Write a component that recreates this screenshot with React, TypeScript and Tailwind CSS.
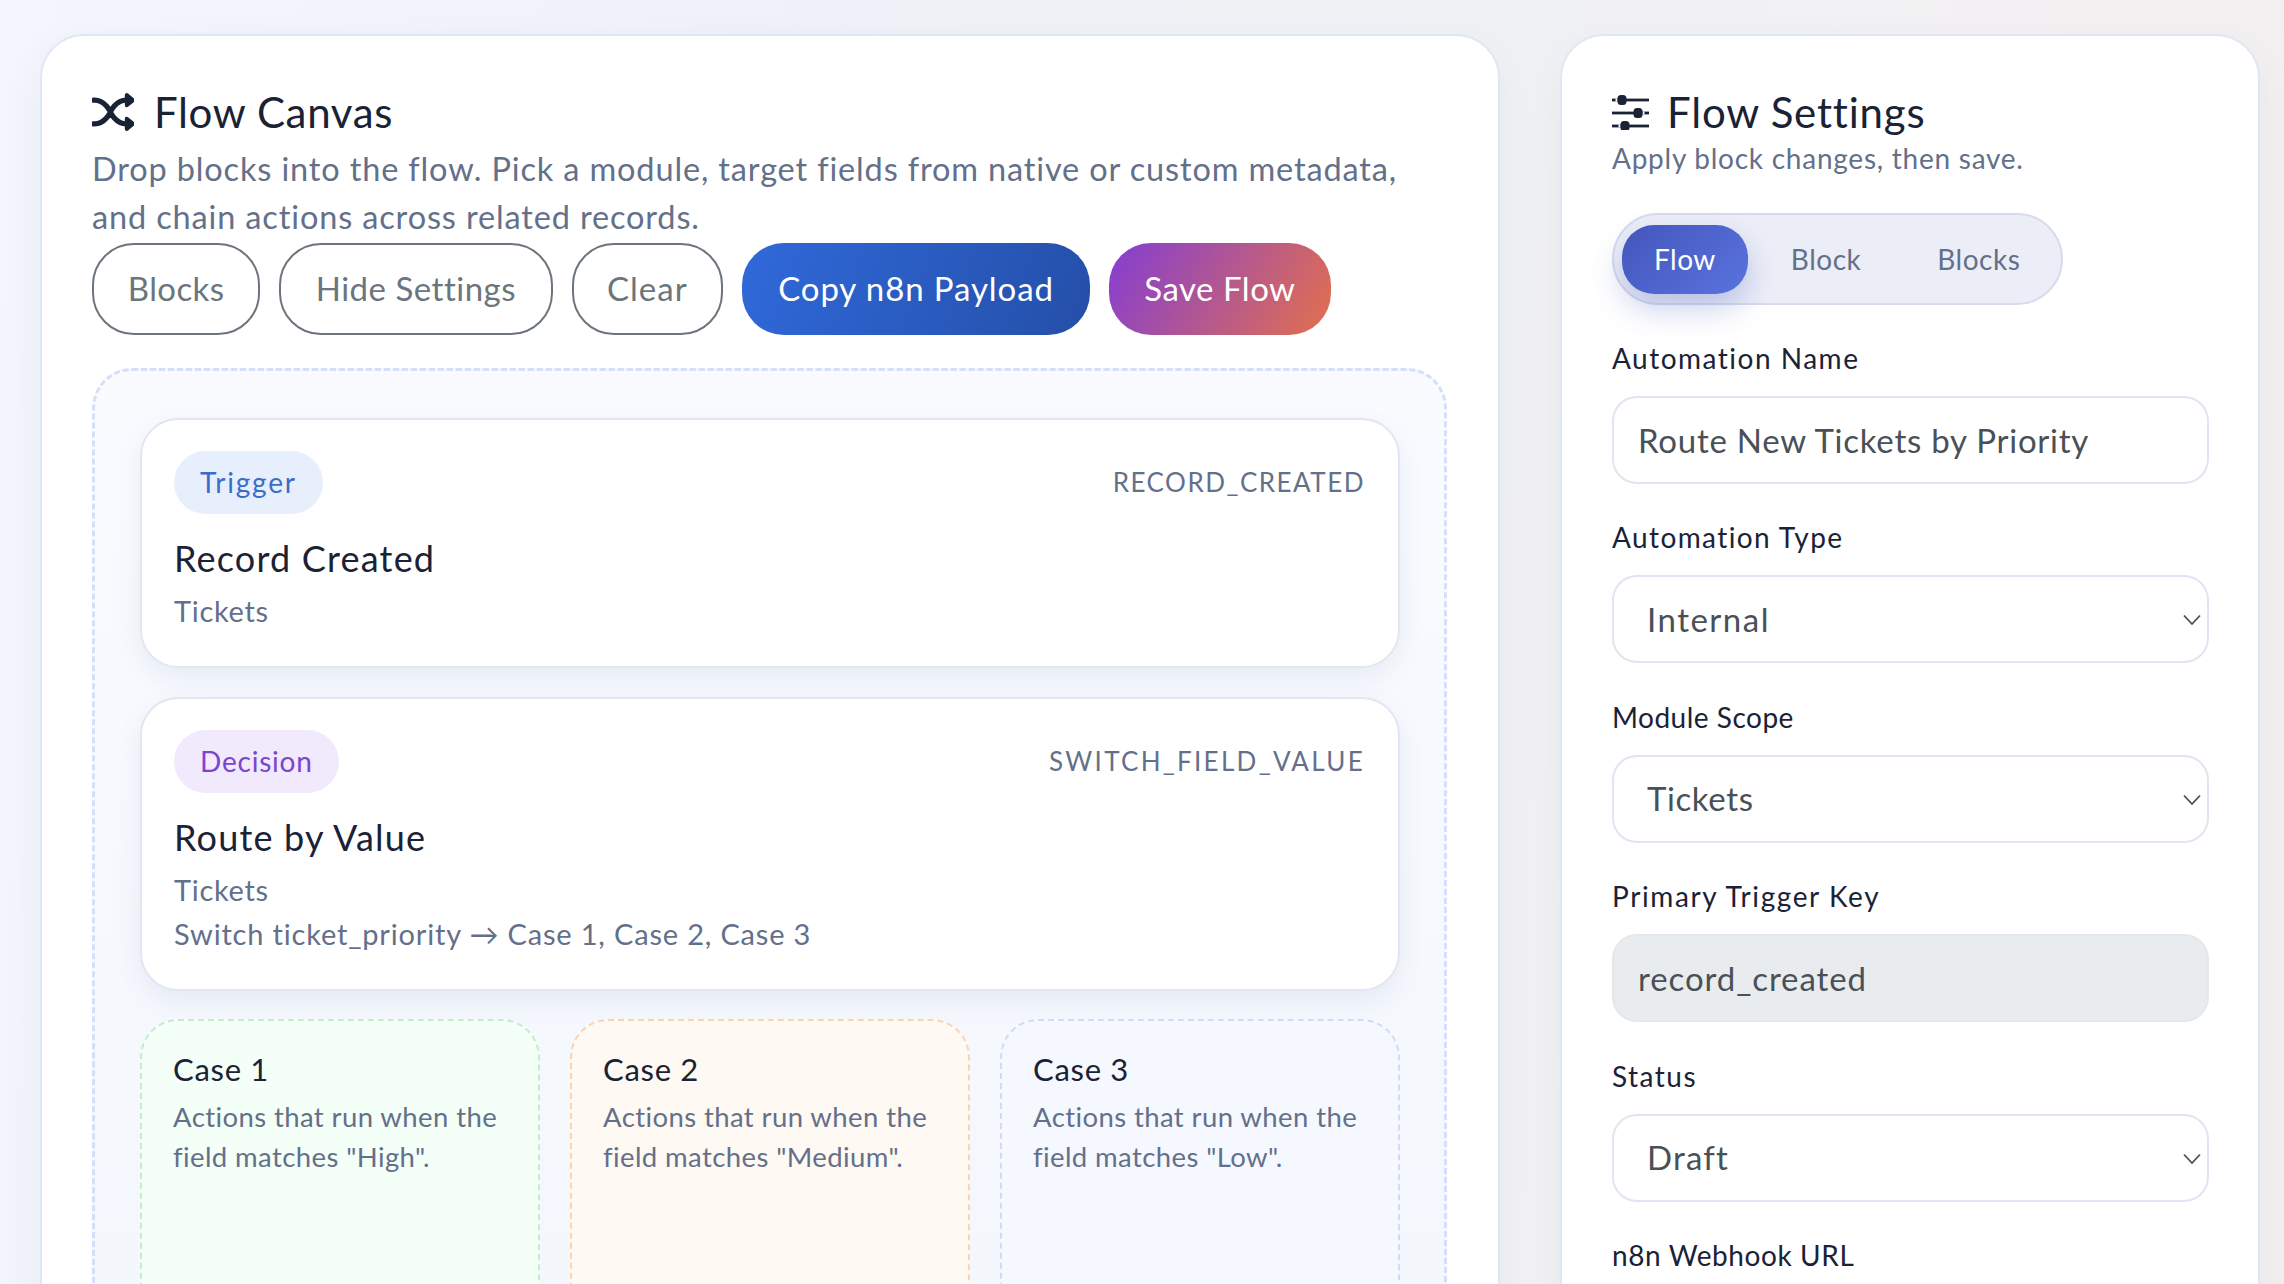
import React from "react";
import { BsShuffle } from "react-icons/bs";

const outlineBtn =
  "h-[92px] rounded-[42px] border-2 border-[#6c757d] bg-white text-[#6c757d] text-[33px]";

function SlidersIcon() {
  return (
    <svg viewBox="0 0 37 36" className="w-[37px] h-[36px]" fill="#1a2236">
      <rect x="0" y="4.6" width="37" height="2.8" />
      <rect x="0" y="17.6" width="37" height="2.8" />
      <rect x="0" y="30.6" width="37" height="2.8" />
      <rect x="3.5" y="4.6" width="2" height="2.8" fill="#fff" />
      <rect x="30.5" y="17.6" width="2" height="2.8" fill="#fff" />
      <rect x="6.5" y="30.6" width="2" height="2.8" fill="#fff" />
      <rect x="5.5" y="1" width="9" height="10" rx="3.5" />
      <rect x="21.5" y="14" width="9" height="10" rx="3.5" />
      <rect x="8.5" y="27" width="9" height="10" rx="3.5" />
    </svg>
  );
}

function Field({ label, labelCls, children }: { label: string; labelCls: string; children: React.ReactNode }) {
  return (
    <div className="mb-[35.4px]">
      <div className={`h-[36px] leading-[36px] text-[28px] text-[#1a2236] mb-[20px] ${labelCls}`}>{label}</div>
      {children}
    </div>
  );
}

function Select({ value, cls }: { value: string; cls: string }) {
  return (
    <div className="relative h-[88px]">
      <select
        defaultValue={value}
        className={`appearance-none w-full h-full rounded-[25px] border-2 border-[#dfe5f1] bg-white pl-[33px] text-[33px] text-[#495057] outline-none ${cls}`}
      >
        <option>{value}</option>
      </select>
      <svg viewBox="0 0 18 12" className="absolute right-[8px] top-[39px] w-[18px] h-[12px]" fill="none" stroke="#495057" strokeWidth="1.8">
        <path d="M1 1.5 9 10l8-8.5" />
      </svg>
    </div>
  );
}

function Block({
  badge,
  badgeCls,
  code,
  codeCls,
  title,
  lines,
}: {
  badge: string;
  badgeCls: string;
  code: string;
  codeCls: string;
  title: string;
  lines: { text: string; cls: string }[];
}) {
  return (
    <div className="rounded-[38px] border-2 border-[#e2e6f0] bg-white px-[32px] pt-[31px] pb-[33px] shadow-[0_10px_28px_rgba(70,90,150,0.09)]">
      <div className="flex items-center justify-between">
        <span className={`h-[63px] leading-[63px] rounded-full px-[26px] text-[28px] ${badgeCls}`}>{badge}</span>
        <span className={`text-[26px] text-[#64708a] mr-[1px] ${codeCls}`}>{code}</span>
      </div>
      <div className="mt-[20px] h-[48px] leading-[48px] text-[36px] text-[#1a2236] tracking-[1.2px]">{title}</div>
      <div className="mt-[7px] text-[29px] leading-[44px] text-[#64708a]">
        {lines.map((l) => (
          <div key={l.text} className={l.cls}>
            {l.text}
          </div>
        ))}
      </div>
    </div>
  );
}

function CaseCol({ title, value, cls }: { title: string; value: string; cls: string }) {
  return (
    <div className={`rounded-[38px] border-2 border-dashed min-h-[400px] pl-[31px] pr-[28px] pt-[28px] ${cls}`}>
      <div className="h-[40px] leading-[40px] text-[31px] text-[#1a2236] tracking-[0.7px]">{title}</div>
      <div className="mt-[8px] text-[27.5px] leading-[40px] text-[#64708a] tracking-[0.4px]">
        Actions that run when the
        <br />
        field matches "{value}".
      </div>
    </div>
  );
}

export default function App() {
  return (
    <div
      className="h-screen overflow-hidden bg-[linear-gradient(100deg,#f3f6fc_0%,#eef1f7_35%,#f2f1f3_75%,#f3efef_100%)] pl-[40px] pr-[24px] pt-[34px] flex gap-[60px] items-start"
      style={{ fontFamily: '"Lato", "Noto Sans", sans-serif' }}
    >
      <section className="w-[1460px] shrink-0 rounded-[44px] border-2 border-[#dfe7f3] bg-white pl-[50px] pr-[51px] pt-[48px] pb-[40px] shadow-[0_14px_40px_rgba(60,80,130,0.06)]">
        <div className="flex items-center gap-[20px] h-[56px]">
          <BsShuffle className="w-[42px] h-[42px] text-[#1a2236] stroke-[1px] stroke-[#1a2236]" />
          <h2 className="text-[42px] leading-[56px] text-[#1a2236] tracking-[0.65px]">Flow Canvas</h2>
        </div>
        <p className="mt-[5px] text-[32.5px] leading-[48px] text-[#64708a] tracking-[0.85px]">
          Drop blocks into the flow. Pick a module, target fields from native or custom metadata,
          <br />
          and chain actions across related records.
        </p>
        <div className="mt-[2px] flex gap-[19px]">
          <button className={`${outlineBtn} px-[33.75px] tracking-[0.4px]`}>Blocks</button>
          <button className={`${outlineBtn} px-[34.5px] tracking-[0.5px]`}>Hide Settings</button>
          <button className={`${outlineBtn} px-[33.5px] tracking-[1px]`}>Clear</button>
          <button className="h-[92px] rounded-[42px] px-[36px] text-white text-[33px] tracking-[0.9px] bg-[linear-gradient(110deg,#3069da,#244fa8)]">
            Copy n8n Payload
          </button>
          <button className="h-[92px] rounded-[42px] px-[35.5px] text-white text-[33px] tracking-[0.5px] bg-[linear-gradient(120deg,#843dd3,#b85a8a_55%,#e3704c)]">
            Save Flow
          </button>
        </div>
        <div className="mt-[33px] rounded-[40px] border-[3px] border-dashed border-[#d5dffb] bg-[linear-gradient(180deg,#f9fbff,#f3f6fc)] pl-[45px] pr-[44px] pt-[47px] pb-[40px]">
          <div className="flex flex-col gap-[29px]">
            <Block
              badge="Trigger"
              badgeCls="bg-[#e7effc] text-[#3b6cc9] tracking-[1.8px]"
              code="RECORD_CREATED"
              codeCls="tracking-[1.5px]"
              title="Record Created"
              lines={[{ text: "Tickets", cls: "tracking-[0.7px]" }]}
            />
            <Block
              badge="Decision"
              badgeCls="bg-[#f1e9fc] text-[#7a45cf] tracking-[0.8px]"
              code="SWITCH_FIELD_VALUE"
              codeCls="tracking-[2.3px]"
              title="Route by Value"
              lines={[
                { text: "Tickets", cls: "tracking-[0.7px]" },
                { text: "Switch ticket_priority → Case 1, Case 2, Case 3", cls: "tracking-[0.82px]" },
              ]}
            />
          </div>
          <div className="mt-[28px] grid grid-cols-3 gap-[30px]">
            <CaseCol title="Case 1" value="High" cls="border-[#c4ebcf] bg-[#f4fff7]" />
            <CaseCol title="Case 2" value="Medium" cls="border-[#fbd3b0] bg-[#fff9f3]" />
            <CaseCol title="Case 3" value="Low" cls="border-[#cfdcf5] bg-[#f5f9ff]" />
          </div>
        </div>
      </section>

      <aside className="w-[700px] shrink-0 rounded-[44px] border-2 border-[#dfe7f3] bg-white pl-[50px] pr-[49px] pt-[48px] pb-[40px] shadow-[0_14px_40px_rgba(60,80,130,0.06)]">
        <div className="flex items-center gap-[18px] h-[56px]">
          <SlidersIcon />
          <h2 className="text-[42px] leading-[56px] text-[#1a2236] tracking-[0.8px]">Flow Settings</h2>
        </div>
        <p className="mt-[-2px] mb-[1px] h-[40px] text-[28px] leading-[40px] text-[#64708a] tracking-[0.75px]">
          Apply block changes, then save.
        </p>
        <div className="mt-[34px] inline-flex h-[92px] items-center gap-[10px] rounded-full border-2 border-[#d7dbed] bg-[#eceef7] px-[8px] tracking-[0.5px]">
          <span className="h-[69px] leading-[69px] rounded-[32px] px-[32px] text-white text-[28px] bg-[linear-gradient(135deg,#4356bc,#5a73de)] shadow-[0_14px_30px_rgba(68,88,190,0.3)]">
            Flow
          </span>
          <span className="px-[33px] text-[28px] text-[#64708a]">Block</span>
          <span className="px-[33px] text-[28px] text-[#64708a]">Blocks</span>
        </div>
        <div className="mt-[35px]">
          <Field label="Automation Name" labelCls="tracking-[1.5px]">
            <input
              readOnly
              value="Route New Tickets by Priority"
              className="w-full h-[88px] rounded-[25px] border-2 border-[#dfe5f1] bg-white px-[24px] text-[33px] text-[#495057] outline-none tracking-[0.75px]"
            />
          </Field>
          <Field label="Automation Type" labelCls="tracking-[1.4px]">
            <Select value="Internal" cls="tracking-[1.5px]" />
          </Field>
          <Field label="Module Scope" labelCls="tracking-[0.5px]">
            <Select value="Tickets" cls="tracking-[0.6px]" />
          </Field>
          <Field label="Primary Trigger Key" labelCls="tracking-[1.6px]">
            <input
              readOnly
              value="record_created"
              className="w-full h-[88px] rounded-[25px] border-2 border-[#e4e7eb] bg-[#e9ecef] px-[24px] text-[33px] text-[#495057] outline-none tracking-[0.9px]"
            />
          </Field>
          <Field label="Status" labelCls="tracking-[1.5px]">
            <Select value="Draft" cls="tracking-[1.2px]" />
          </Field>
          <Field label="n8n Webhook URL" labelCls="tracking-[0.6px]">
            <div className="h-[88px]" />
          </Field>
        </div>
      </aside>
    </div>
  );
}
